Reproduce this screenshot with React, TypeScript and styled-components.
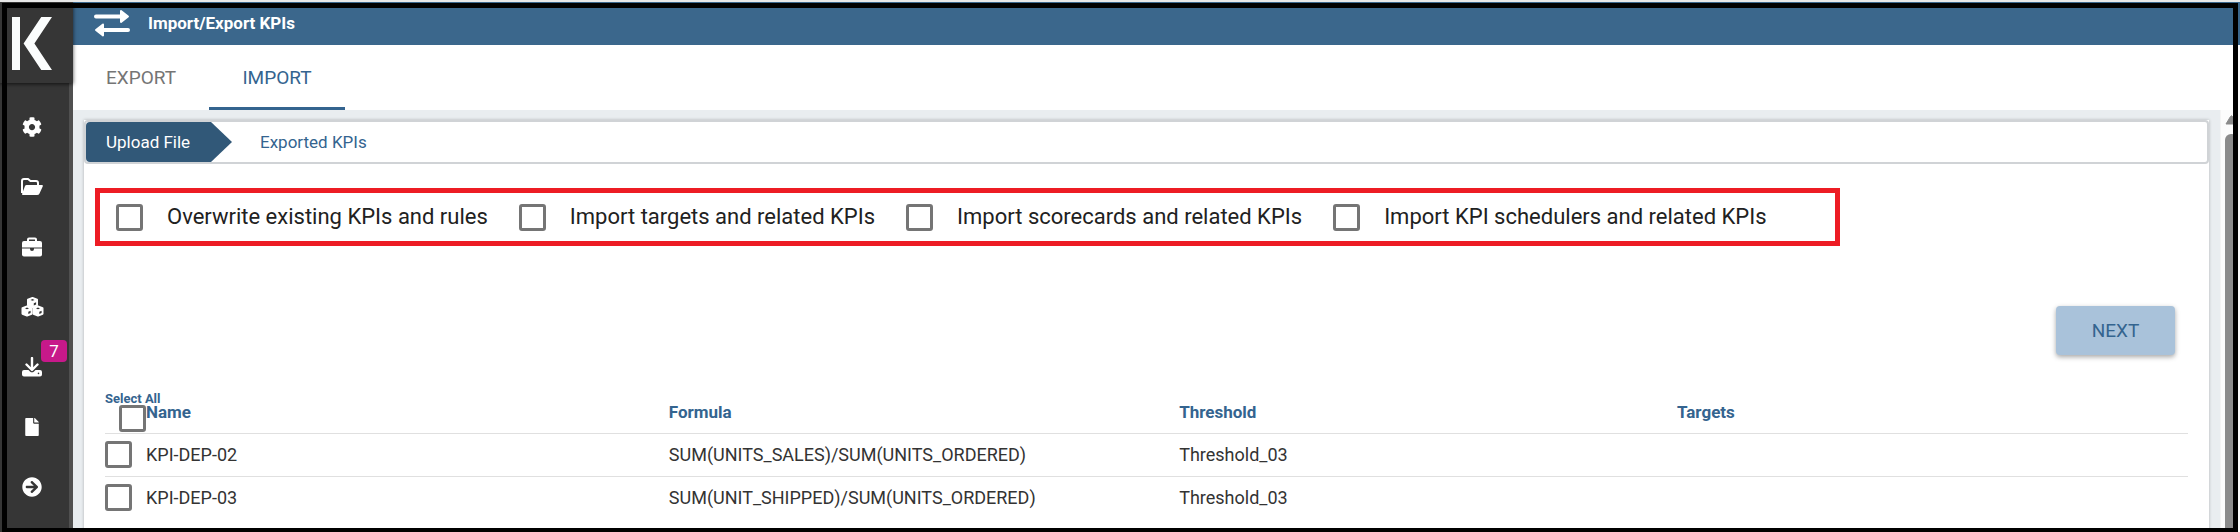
import React from 'react';
import styled, { createGlobalStyle, css } from 'styled-components';
import { FaCog, FaFile, FaArrowCircleRight } from 'react-icons/fa';

const color = {
  header: '#3b678c',
  step: '#315878',
  link: '#34648f',
  side: '#363636',
  page: '#e9edf0',
  line: '#e0e0e0',
  text: '#212121',
  cell: '#333',
  muted: '#757575',
};

const GlobalStyle = createGlobalStyle`
  *, *::before, *::after { box-sizing: border-box; }
  body {
    margin: 0;
    background: #fff;
    color: ${color.text};
    font-family: Roboto, "Liberation Sans", sans-serif;
    font-size: 17px;
    line-height: 20px;
  }
`;

const Shell = styled.div`
  position: relative;
  display: flex;
  height: 100vh;
  overflow: hidden;
  border-top: 2px solid #e8e8e8;
`;

const Frame = styled.div`
  position: absolute;
  inset: 1px 2px 0;
  border: 5px solid #000;
  border-bottom-width: 4px;
  pointer-events: none;
`;

const Sidebar = styled.aside`
  flex: none;
  width: 73px;
  background: ${color.side};
`;

const LogoBox = styled.a`
  position: relative;
  display: block;
  height: 81px;
  padding: 15px 0 0 12px;
  background: ${color.side};
  box-shadow: 0 1px 4px rgba(0, 0, 0, 0.7);
`;

const Nav = styled.nav`
  display: flex;
  flex-direction: column;
  height: 100%;
  padding: 14px 0 0;
  border-right: 4px solid #505050;
`;

const NavLink = styled.a`
  position: relative;
  display: flex;
  align-items: center;
  justify-content: center;
  height: 60px;
  padding-right: 5px;
  color: #fff;
`;

const Badge = styled.span`
  position: absolute;
  top: 3px;
  right: 2px;
  width: 26px;
  height: 22px;
  border-radius: 4px;
  background: #c7198a;
  font-size: 17px;
  line-height: 22px;
  text-align: center;
`;

const Main = styled.main`
  display: flex;
  flex: 1;
  flex-direction: column;
  min-width: 0;
`;

const Header = styled.header`
  display: flex;
  align-items: center;
  gap: 18px;
  height: 43px;
  padding: 0 21px 2px;
  background: ${color.header};
  color: #fff;
`;

const Title = styled.h1`
  margin: 0;
  font-size: 17px;
  font-weight: 700;
`;

const Tabs = styled.div`
  display: flex;
  height: 65px;
  background: #fff;
`;

const Tab = styled.button<{ $active?: boolean }>`
  width: 136px;
  padding: 4px 0 0;
  border: 0;
  border-bottom: 3px solid ${(p) => (p.$active ? color.link : 'transparent')};
  background: none;
  color: ${(p) => (p.$active ? color.link : color.muted)};
  font: inherit;
  font-size: 19px;
`;

const Body = styled.div`
  display: flex;
  flex: 1;
  min-height: 0;
`;

const Content = styled.div`
  flex: 1;
  padding: 10px 11px 0;
  background: ${color.page};
`;

const Card = styled.section`
  height: 100%;
  background: #fff;
  box-shadow: 0 0 3px rgba(0, 0, 0, 0.25);
`;

const Steps = styled.ol`
  display: flex;
  height: 44px;
  margin: 0;
  padding: 0;
  border: 2px solid #d0d3d6;
  border-radius: 4px;
  list-style: none;
`;

const Step = styled.li<{ $active?: boolean }>`
  display: flex;
  align-items: center;
  padding-left: ${(p) => (p.$active ? 20 : 28)}px;
  color: ${color.link};
  ${(p) =>
    p.$active &&
    css`
      width: 146px;
      border-radius: 4px 0 0 4px;
      background: ${color.step};
      color: #fff;
      clip-path: polygon(0 0, 125px 0, 100% 50%, 125px 100%, 0 100%);
    `}
`;

const Options = styled.div`
  display: flex;
  align-items: center;
  gap: 31px;
  width: fit-content;
  height: 58px;
  margin: 24px 0 0 11px;
  padding: 0 68px 0 16px;
  border: 5px solid #ed1c24;
`;

const Option = styled.label`
  display: flex;
  align-items: center;
  gap: 24px;
  font-size: 22px;
  line-height: 26px;
  white-space: nowrap;
`;

const Check = styled.input.attrs({ type: 'checkbox' })`
  display: block;
  flex: none;
  appearance: none;
  width: 27px;
  height: 27px;
  margin: 0;
  border: 3px solid ${color.muted};
  border-radius: 3px;
  background: #fff;

  &:checked {
    background: ${color.link};
  }
`;

const Actions = styled.div`
  display: flex;
  justify-content: flex-end;
  padding: 60px 34px 30px;
`;

const NextButton = styled.button`
  width: 119px;
  height: 49px;
  padding: 0;
  border: 0;
  border-radius: 4px;
  background: #a9c2da;
  box-shadow: 0 2px 5px rgba(0, 0, 0, 0.35);
  color: ${color.link};
  font: inherit;
  font-size: 19px;
`;

const TableWrap = styled.div`
  padding: 0 21px;
`;

const Table = styled.table`
  width: 100%;
  border-collapse: collapse;
  table-layout: fixed;
`;

const Th = styled.th`
  height: 48px;
  padding: 7px 0 0;
  border-bottom: 1px solid ${color.line};
  color: ${color.link};
  font-weight: 700;
  text-align: left;
`;

const Td = styled.td`
  height: 43px;
  padding: 0;
  color: ${color.cell};
  font-size: 18px;

  tr:not(:last-child) > & {
    border-bottom: 1px solid ${color.line};
  }
`;

const SelectAll = styled.label`
  display: flex;
  flex-direction: column;
  align-items: flex-end;
  font-size: 13px;
  line-height: 13px;
`;

const SelectAllText = styled.span`
  width: 100%;
  white-space: nowrap;
`;

const Scrollbar = styled.div`
  display: flex;
  flex: none;
  flex-direction: column;
  gap: 9px;
  width: 20px;
  padding: 5px 2px 0 4px;
  border-left: 1px solid #f4f4f4;
  background: #fcfcfc;
`;

const Thumb = styled.div`
  flex: 1;
  border-radius: 6px 6px 0 0;
  background: #8b8b8b;
`;

const Folder = () => (
  <svg width="22" height="18" viewBox="0 0 22 18" aria-hidden="true">
    <path d="M1 15V3Q1 1 3 1H7L9.500 3H15Q17 3 17 5V7" fill="none" stroke="currentColor" strokeWidth="2" />
    <path d="M5.500 7H21Q22.300 7 21.700 8.500L18.500 15.500Q17.800 17 16 17H2Q.500 17 1.200 15.500L4 8Q4.500 7 5.500 7Z" fill="currentColor" />
  </svg>
);

const Briefcase = () => (
  <svg width="22" height="20" viewBox="0 0 22 20" fill="currentColor" aria-hidden="true">
    <path d="M6 4V2.500Q6 0.500 8 0.500H14Q16 0.500 16 2.500V4H19Q21 4 21 6V10.500H1V6Q1 4 3 4ZM8 4H14V2.500H8Z" fillRule="evenodd" />
    <path d="M1 11.500H9V12Q9 14 11 14Q13 14 13 12V11.500H21V17.500Q21 19.500 19 19.500H3Q1 19.500 1 17.500Z" />
  </svg>
);

const Cube = ({ x, y }: { x: number; y: number }) => (
  <g transform={`translate(${x} ${y})`}>
    <path d="M0 -4.500L4.500 -2.700V2.700L0 4.500L-4.500 2.700V-2.700Z" fill="currentColor" stroke="currentColor" strokeWidth="2" strokeLinejoin="round" />
    <path d="M-2 -2.600L0 -3.400L2 -2.600L0 -1.800ZM1.300 .8L3.600 -.2V2L1.300 3Z" fill={color.side} />
  </g>
);

const Cubes = () => (
  <svg width="23" height="20" viewBox="0 0 23 20" aria-hidden="true">
    <Cube x={11.5} y={5.5} />
    <Cube x={6} y={14} />
    <Cube x={17} y={14} />
  </svg>
);

const Download = () => (
  <svg width="20" height="20" viewBox="0 0 20 20" aria-hidden="true">
    <path d="M10 1V12M4.500 7.500L10 13L15.500 7.500" fill="none" stroke="currentColor" strokeWidth="2.400" strokeLinecap="round" strokeLinejoin="round" />
    <path d="M2 13H6.500L8 14.500Q10 16.200 12 14.500L13.500 13H18Q20 13 20 15V17.500Q20 19.500 18 19.500H2Q0 19.500 0 17.500V15Q0 13 2 13ZM16.500 15.600A.8.8 0 1 0 16.500 17.200A.8.8 0 1 0 16.500 15.600Z" fill="currentColor" fillRule="evenodd" />
  </svg>
);

const Logo = () => (
  <svg width="40" height="53" viewBox="0 0 40 53" fill="none" stroke="#fbfdfd" aria-hidden="true">
    <path d="M4 0V53" strokeWidth="8" />
    <path d="M40 -8L17 26.500L40 61" strokeWidth="9" />
  </svg>
);

const Exchange = () => (
  <svg width="36" height="28" viewBox="0 0 36 28" aria-hidden="true">
    <g stroke="#fff" strokeWidth="4" strokeLinecap="round">
      <path d="M2 7.500H27M34 21H9" />
    </g>
    <g fill="#fff" stroke="#fff" strokeWidth="2" strokeLinejoin="round">
      <path d="M27 2L34 7.500L27 13ZM9 15.500L2 21L9 26.500Z" />
    </g>
  </svg>
);

const navItems = [
  { label: 'Settings', icon: <FaCog size={20} /> },
  { label: 'Folders', icon: <Folder /> },
  { label: 'Briefcase', icon: <Briefcase /> },
  { label: 'Modules', icon: <Cubes /> },
  { label: 'Downloads', icon: <Download />, badge: 7 },
  { label: 'Documents', icon: <FaFile size={18} /> },
  { label: 'Continue', icon: <FaArrowCircleRight size={20} /> },
];

const options = [
  'Overwrite existing KPIs and rules',
  'Import targets and related KPIs',
  'Import scorecards and related KPIs',
  'Import KPI schedulers and related KPIs',
];

const kpis = [
  { name: 'KPI-DEP-02', formula: 'SUM(UNITS_SALES)/SUM(UNITS_ORDERED)', threshold: 'Threshold_03' },
  { name: 'KPI-DEP-03', formula: 'SUM(UNIT_SHIPPED)/SUM(UNITS_ORDERED)', threshold: 'Threshold_03' },
];

export default function App() {
  return (
    <Shell>
      <GlobalStyle />
      <Sidebar>
        <LogoBox href="#" aria-label="Home">
          <Logo />
        </LogoBox>
        <Nav>
          {navItems.map((item) => (
            <NavLink key={item.label} href="#" aria-label={item.label}>
              {item.icon}
              {item.badge && <Badge>{item.badge}</Badge>}
            </NavLink>
          ))}
        </Nav>
      </Sidebar>
      <Main>
        <Header>
          <Exchange />
          <Title>Import/Export KPIs</Title>
        </Header>
        <Tabs role="tablist">
          <Tab role="tab" aria-selected={false}>EXPORT</Tab>
          <Tab role="tab" aria-selected $active>IMPORT</Tab>
        </Tabs>
        <Body>
          <Content>
            <Card>
              <Steps>
                <Step $active>Upload File</Step>
                <Step>Exported KPIs</Step>
              </Steps>
              <Options>
                {options.map((text) => (
                  <Option key={text}>
                    <Check />
                    {text}
                  </Option>
                ))}
              </Options>
              <Actions>
                <NextButton type="button">NEXT</NextButton>
              </Actions>
              <TableWrap>
                <Table>
                  <colgroup>
                    <col style={{ width: 41 }} />
                    <col style={{ width: '25.1%' }} />
                    <col style={{ width: '24.5%' }} />
                    <col style={{ width: '23.9%' }} />
                    <col />
                  </colgroup>
                  <thead>
                    <tr>
                      <Th>
                        <SelectAll>
                          <SelectAllText>Select All</SelectAllText>
                          <Check />
                        </SelectAll>
                      </Th>
                      <Th>Name</Th>
                      <Th>Formula</Th>
                      <Th>Threshold</Th>
                      <Th>Targets</Th>
                    </tr>
                  </thead>
                  <tbody>
                    {kpis.map((kpi) => (
                      <tr key={kpi.name}>
                        <Td>
                          <Check aria-label={`Select ${kpi.name}`} />
                        </Td>
                        <Td>{kpi.name}</Td>
                        <Td>{kpi.formula}</Td>
                        <Td>{kpi.threshold}</Td>
                        <Td />
                      </tr>
                    ))}
                  </tbody>
                </Table>
              </TableWrap>
            </Card>
          </Content>
          <Scrollbar aria-hidden="true">
            <svg width="13" height="10" viewBox="0 0 13 10">
              <path d="M1 9L5.500 1.500Q6.500 0 7.500 1.500L12 9Z" fill="#8b8b8b" stroke="#8b8b8b" />
            </svg>
            <Thumb />
          </Scrollbar>
        </Body>
      </Main>
      <Frame />
    </Shell>
  );
}
